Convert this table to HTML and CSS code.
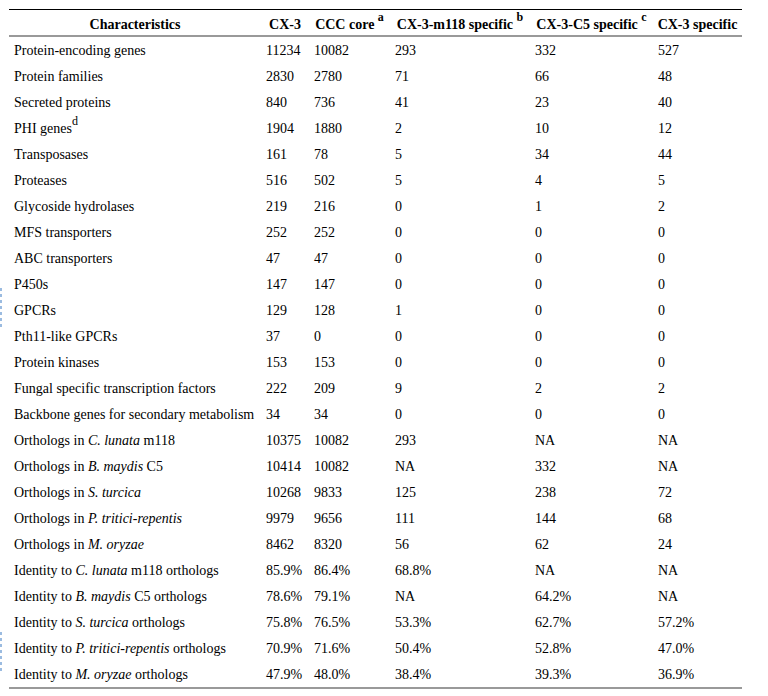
FILE: index.html
```html
<!DOCTYPE html>
<html>
<head>
<meta charset="utf-8">
<link rel="stylesheet" href="styles.css">
</head>
<body>
<div class="edge edge-a"></div>
<div class="edge edge-b"></div>
<table class="tbl">
  <colgroup>
    <col class="c1"><col class="c2"><col class="c3"><col class="c4"><col class="c5"><col class="c6">
  </colgroup>
  <thead>
    <tr>
      <th>Characteristics</th>
      <th>CX-3</th>
      <th>CCC core <sup>a</sup></th>
      <th>CX-3-m118 specific <sup>b</sup></th>
      <th>CX-3-C5 specific <sup>c</sup></th>
      <th>CX-3 specific</th>
    </tr>
  </thead>
  <tbody>
    <tr><td>Protein-encoding genes</td><td>11234</td><td>10082</td><td>293</td><td>332</td><td>527</td></tr>
    <tr><td>Protein families</td><td>2830</td><td>2780</td><td>71</td><td>66</td><td>48</td></tr>
    <tr><td>Secreted proteins</td><td>840</td><td>736</td><td>41</td><td>23</td><td>40</td></tr>
    <tr><td>PHI genes<sup>d</sup></td><td>1904</td><td>1880</td><td>2</td><td>10</td><td>12</td></tr>
    <tr><td>Transposases</td><td>161</td><td>78</td><td>5</td><td>34</td><td>44</td></tr>
    <tr><td>Proteases</td><td>516</td><td>502</td><td>5</td><td>4</td><td>5</td></tr>
    <tr><td>Glycoside hydrolases</td><td>219</td><td>216</td><td>0</td><td>1</td><td>2</td></tr>
    <tr><td>MFS transporters</td><td>252</td><td>252</td><td>0</td><td>0</td><td>0</td></tr>
    <tr><td>ABC transporters</td><td>47</td><td>47</td><td>0</td><td>0</td><td>0</td></tr>
    <tr><td>P450s</td><td>147</td><td>147</td><td>0</td><td>0</td><td>0</td></tr>
    <tr><td>GPCRs</td><td>129</td><td>128</td><td>1</td><td>0</td><td>0</td></tr>
    <tr><td>Pth11-like GPCRs</td><td>37</td><td>0</td><td>0</td><td>0</td><td>0</td></tr>
    <tr><td>Protein kinases</td><td>153</td><td>153</td><td>0</td><td>0</td><td>0</td></tr>
    <tr><td>Fungal specific transcription factors</td><td>222</td><td>209</td><td>9</td><td>2</td><td>2</td></tr>
    <tr><td>Backbone genes for secondary metabolism</td><td>34</td><td>34</td><td>0</td><td>0</td><td>0</td></tr>
    <tr><td>Orthologs in <i>C. lunata</i> m118</td><td>10375</td><td>10082</td><td>293</td><td>NA</td><td>NA</td></tr>
    <tr><td>Orthologs in <i>B. maydis</i> C5</td><td>10414</td><td>10082</td><td>NA</td><td>332</td><td>NA</td></tr>
    <tr><td>Orthologs in <i>S. turcica</i></td><td>10268</td><td>9833</td><td>125</td><td>238</td><td>72</td></tr>
    <tr><td>Orthologs in <i>P. tritici-repentis</i></td><td>9979</td><td>9656</td><td>111</td><td>144</td><td>68</td></tr>
    <tr><td>Orthologs in <i>M. oryzae</i></td><td>8462</td><td>8320</td><td>56</td><td>62</td><td>24</td></tr>
    <tr><td>Identity to <i>C. lunata</i> m118 orthologs</td><td>85.9%</td><td>86.4%</td><td>68.8%</td><td>NA</td><td>NA</td></tr>
    <tr><td>Identity to <i>B. maydis</i> C5 orthologs</td><td>78.6%</td><td>79.1%</td><td>NA</td><td>64.2%</td><td>NA</td></tr>
    <tr><td>Identity to <i>S. turcica</i> orthologs</td><td>75.8%</td><td>76.5%</td><td>53.3%</td><td>62.7%</td><td>57.2%</td></tr>
    <tr><td>Identity to <i>P. tritici-repentis</i> orthologs</td><td>70.9%</td><td>71.6%</td><td>50.4%</td><td>52.8%</td><td>47.0%</td></tr>
    <tr><td>Identity to <i>M. oryzae</i> orthologs</td><td>47.9%</td><td>48.0%</td><td>38.4%</td><td>39.3%</td><td>36.9%</td></tr>
  </tbody>
</table>
</body>
</html>
```

FILE: styles.css
```css
html, body {
  margin: 0;
  padding: 0;
  background: #fff;
}
body {
  padding: 9px 0 0 9px;
  font-family: "Liberation Serif", "Times New Roman", serif;
  font-size: 14px;
  color: #000;
}
.tbl {
  border-collapse: collapse;
  table-layout: fixed;
  width: 733px;
  border-top: 1px solid #000;
  border-bottom: 2px solid #999;
}
.c1 { width: 252px; }
.c2 { width: 48px; }
.c3 { width: 81px; }
.c4 { width: 140px; }
.c5 { width: 123px; }
.c6 { width: 89px; }
.tbl th {
  font-weight: bold;
  text-align: center;
  line-height: 21px;
  padding: 4px 0 0 0;
  border-bottom: 2px solid #999;
  white-space: nowrap;
  vertical-align: top;
}
.tbl td {
  line-height: 24px;
  padding: 2px 0 0 5px;
  text-align: left;
  white-space: nowrap;
  vertical-align: top;
}
sup {
  font-size: 12px;
  line-height: 0;
  vertical-align: 8px;
}
.edge {
  position: absolute;
  left: 0;
  width: 2px;
  background: repeating-linear-gradient(to bottom, #9bbbe0 0 3px, transparent 3px 6px);
}
.edge-a { top: 288px; height: 40px; }
.edge-b { top: 632px; height: 40px; }
```
